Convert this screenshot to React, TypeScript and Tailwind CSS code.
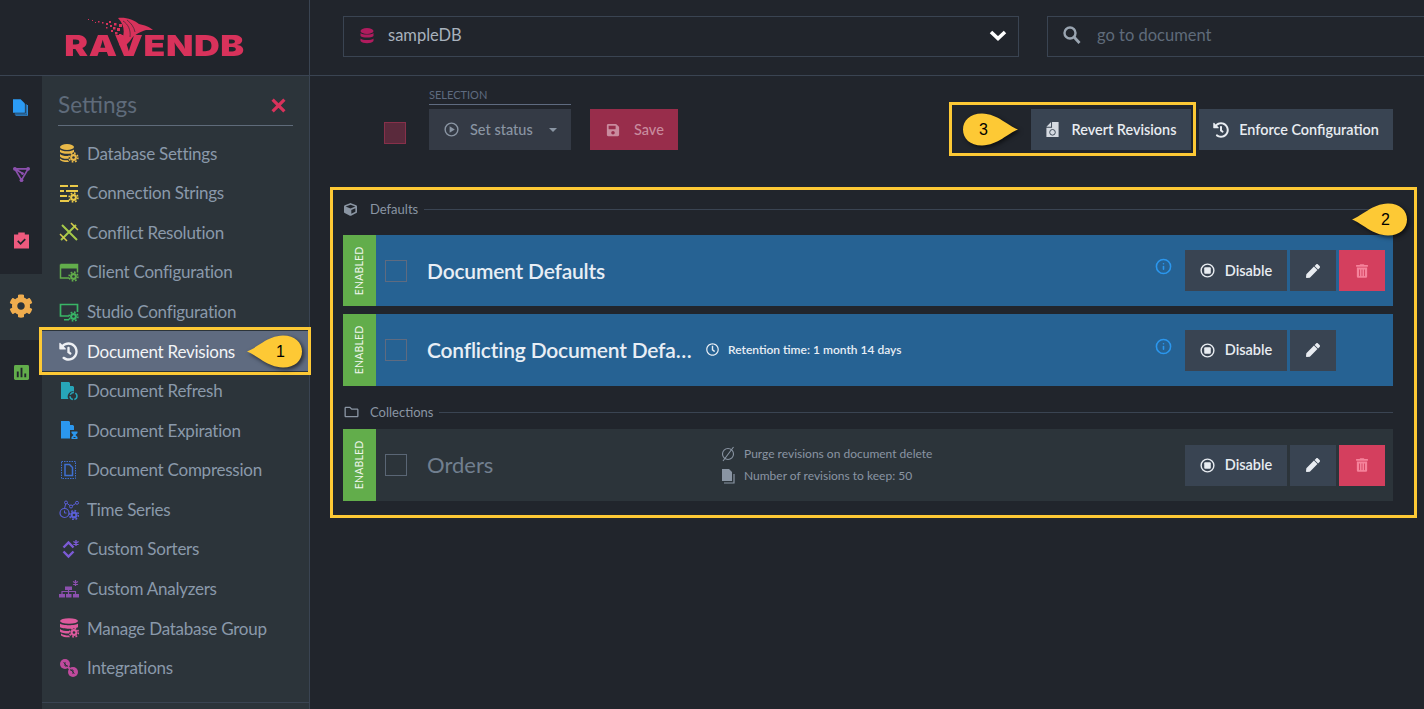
import type { ReactNode } from 'react'
import { FaCog, FaCube, FaHistory, FaPen, FaRegClock, FaRegFolder, FaSave, FaTrashAlt } from 'react-icons/fa'
import { Info } from 'lucide-react'

// small gear used on the settings icons
function Cog({ x, y, c, hole = '#2c343a' }: { x: number; y: number; c: string; hole?: string }) {
  return (
    <g>
      <circle cx={x} cy={y} r={3.4} fill={c} />
      <circle cx={x} cy={y} r={4.4} fill="none" stroke={c} strokeWidth={1.6} strokeDasharray="1.7 1.75" />
      <circle cx={x} cy={y} r={1.3} fill={hole} />
    </g>
  )
}

function Ico({ children, className = 'w-5 h-5' }: { children: ReactNode; className?: string }) {
  return <svg viewBox="0 0 20 20" className={className}>{children}</svg>
}

const menu: { label: string; icon: ReactNode; active?: boolean }[] = [
  {
    label: 'Database Settings',
    icon: (
      <Ico>
        <ellipse cx="8" cy="4" rx="7" ry="3" fill="#e9b949" />
        <path d="M1 6.500c2 2.400 12 2.400 14 0V9c-2 2.400-12 2.400-14 0zM1 11c2 2 7 2.400 9 1.700l-.4 3C6 16 2 15.400 1 13.500zM1 15.500c1.500 1.500 5 2 8 1.800l1 1.700c-4 .3-8-.5-9-2z" fill="#e9b949" />
        <Cog x={14.500} y={14.500} c="#e9b949" />
      </Ico>
    ),
  },
  {
    label: 'Connection Strings',
    icon: (
      <Ico>
        <path d="M1 2h8v2H1zM11 2h8v2h-8zM1 7h4v2H1zM7 7h12v2H7zM1 12h7v2H1zM1 17h9v2H1z" fill="#e9c949" />
        <Cog x={14.500} y={14.500} c="#e9c949" />
      </Ico>
    ),
  },
  {
    label: 'Conflict Resolution',
    icon: (
      <Ico>
        <path d="M2 18 17 3M3 3l15 15" stroke="#a5c94a" strokeWidth="2" fill="none" />
        <path d="M1 12l7 7M12 1l7 7" stroke="#d7c94a" strokeWidth="1.500" fill="none" />
      </Ico>
    ),
  },
  {
    label: 'Client Configuration',
    icon: (
      <Ico>
        <path d="M1.500 2.500h17v8M10 16H1.500v-13.500" stroke="#62ad4b" strokeWidth="1.500" fill="none" />
        <path d="M1 3h18v3.500H1z" fill="#62ad4b" />
        <Cog x={14.500} y={14.500} c="#62ad4b" />
      </Ico>
    ),
  },
  {
    label: 'Studio Configuration',
    icon: (
      <Ico>
        <path d="M10 14H1.500V2.500h17V10" stroke="#39b566" strokeWidth="1.700" fill="none" />
        <path d="M5 17h5v1.500H5z" fill="#39b566" />
        <Cog x={14.500} y={14.500} c="#39b566" />
      </Ico>
    ),
  },
  { label: 'Document Revisions', active: true, icon: <FaHistory className="w-[19px] h-[19px] text-[#eef0f4]" /> },
  {
    label: 'Document Refresh',
    icon: (
      <Ico>
        <path d="M2 1h8l5 5v4.500A5 5 0 0 0 9.500 18H2z" fill="#27a5b8" />
        <path d="M11 1l4 4h-4z" fill="#2c343a" />
        <circle cx="14.500" cy="15" r="3.500" fill="none" stroke="#27a5b8" strokeWidth="1.500" strokeDasharray="4.500 1.500" />
      </Ico>
    ),
  },
  {
    label: 'Document Expiration',
    icon: (
      <Ico>
        <path d="M2 1h8l5 5v4H11v8.500H2z" fill="#2b97ee" />
        <path d="M11 1l4 4h-4z" fill="#2c343a" />
        <path d="M12.500 11.500h6v1.500l-2 2 2 2v2h-6v-2l2-2-2-2z" fill="#2b97ee" />
        <path d="M14.500 17.500h2" stroke="#2c343a" strokeWidth="1" />
      </Ico>
    ),
  },
  {
    label: 'Document Compression',
    icon: (
      <Ico>
        <rect x="2.500" y="1.500" width="14" height="17" fill="none" stroke="#3f6fd1" strokeWidth="1" strokeDasharray="1.500 1" />
        <path d="M6 4.500h4.500l3 3v8H6z" fill="none" stroke="#3f6fd1" strokeWidth="1.500" />
      </Ico>
    ),
  },
  {
    label: 'Time Series',
    icon: (
      <Ico>
        <circle cx="5.500" cy="13" r="4.500" fill="none" stroke="#5a5fd6" strokeWidth="1.200" />
        <path d="M5.500 10.500V13h2" stroke="#5a5fd6" strokeWidth="1" fill="none" />
        <path d="M7 2.500l5 4 5.500-3.500M7 2.500 5.500 8.500" stroke="#5a5fd6" strokeWidth="1" fill="none" />
        <circle cx="7" cy="2.500" r="1.500" fill="#2c343a" stroke="#5a5fd6" />
        <circle cx="12" cy="6.500" r="1.500" fill="#2c343a" stroke="#5a5fd6" />
        <circle cx="18" cy="2.800" r="1.500" fill="#2c343a" stroke="#5a5fd6" />
        <Cog x={15} y={15} c="#5a5fd6" />
      </Ico>
    ),
  },
  {
    label: 'Custom Sorters',
    icon: (
      <Ico>
        <path d="M4.500 8.500 9.500 3.500l5 5M4.500 12.500l5 5 5-5" fill="none" stroke="#7c5bd6" strokeWidth="2.400" />
        <path d="M17 1v6M14.400 2.500l5.200 3M19.600 2.500l-5.200 3" stroke="#7c5bd6" strokeWidth="1.300" />
      </Ico>
    ),
  },
  {
    label: 'Custom Analyzers',
    icon: (
      <Ico>
        <path d="M6 7.500h7v3.500H6zM0 15h6v3.500H0zM7 15h5.500v3.500H7zM14 15h6v3.500h-6z" fill="#8c50ae" />
        <path d="M3 15v-2.500h13.500V15M9.500 11v4" stroke="#8c50ae" strokeWidth="1.200" fill="none" />
        <path d="M16.500 1v6M14 2.500l5 3M19 2.500l-5 3" stroke="#8c50ae" strokeWidth="1.300" />
      </Ico>
    ),
  },
  {
    label: 'Manage Database Group',
    icon: (
      <Ico>
        <ellipse cx="10" cy="3" rx="9" ry="2.800" fill="#dd5a9d" />
        <path d="M1 5.500c2 2.300 16 2.300 18 0v3.500c-2 2.300-16 2.300-18 0zM1 11c2 2 8 2.300 10 2l-1 2.500c-4 0-8-.5-9-2zM2 15.500c2 1.500 5 2 8 2l1 1.800c-4 .2-7-.3-9-1.800z" fill="#dd5a9d" />
        <Cog x={15} y={14.500} c="#dd5a9d" />
      </Ico>
    ),
  },
  {
    label: 'Integrations',
    icon: (
      <Ico>
        <circle cx="6" cy="6" r="5" fill="#c04a9d" />
        <circle cx="14" cy="14" r="5" fill="#c04a9d" />
        <path d="M6 4v4h3M4.500 4.500l4 4M14 16v-4h-3M15.500 15.500l-4-4" stroke="#2c343a" strokeWidth="1" fill="none" />
        <path d="M8 9.500 10.500 12l1.500-1.500-2.500-2.500z" fill="#c04a9d" />
      </Ico>
    ),
  },
]

const rail: ReactNode[] = [
  <svg viewBox="0 0 20 22" className="w-[17px] h-[21px]">
    <path d="M3 19h14V7" fill="none" stroke="#2f8fdf" strokeWidth="1.200" />
    <path d="M2 17.500h13.500V6" fill="none" stroke="#2f8fdf" strokeWidth="1.200" />
    <path d="M0 0h9l5 5v11H0z" fill="#2b9bf4" />
  </svg>,
  <svg viewBox="0 0 18 18" className="w-[17px] h-[17px]">
    <path d="M2 3h14L9 15zM2 3l9 5.500M16 3 9 15" fill="none" stroke="#8c50ae" strokeWidth="1.800" />
    <circle cx="2" cy="3" r="2" fill="#8c50ae" />
    <circle cx="16" cy="3" r="2" fill="#8c50ae" />
    <circle cx="9" cy="15" r="2" fill="#8c50ae" />
    <circle cx="10" cy="8" r="1.500" fill="#8c50ae" />
  </svg>,
  <svg viewBox="0 0 16 18" className="w-[15px] h-[18px]">
    <path d="M0 3h4.500V1h7v2H16v15H0z" fill="#ee5a7e" />
    <path d="M4 10l3 3 5-5" fill="none" stroke="#21252c" strokeWidth="1.800" />
  </svg>,
  <FaCog className="w-[24px] h-[24px] text-[#f0ad4e]" />,
  <svg viewBox="0 0 16 16" className="w-[15px] h-[15px]">
    <rect width="16" height="16" rx="1.500" fill="#62ad4b" />
    <path d="M3 7h2v6H3zM7 3h2v10H7zM11 9h2v4h-2z" fill="#21252c" />
  </svg>,
]

// teardrop marker of the annotations
function Callout({ n, dir, className }: { n: string; dir: 'left' | 'right'; className: string }) {
  return (
    <div className={`absolute w-[56px] h-[33px] ${className}`}>
      <svg viewBox="0 0 56 33" className="absolute inset-0 w-full h-full drop-shadow-[2px_2px_2px_rgba(0,0,0,0.6)]">
        {dir === 'left' ? (
          <path d="M0 16.500C10 13 20 1 36 .5c12 0 19 7 19 16s-7 16-19 16C20 32 10 20 0 16.500z" fill="#fdc935" />
        ) : (
          <path d="M56 16.500C46 13 36 1 20 .5c-12 0-19 7-19 16s7 16 19 16C36 32 46 20 56 16.500z" fill="#fdc935" />
        )}
      </svg>
      <span className={`absolute top-0 leading-[33px] text-[16px] text-black [font-family:'Liberation_Sans',sans-serif] ${dir === 'left' ? 'left-[29px]' : 'left-[17px]'}`}>{n}</span>
    </div>
  )
}

function StopCircle() {
  return (
    <svg viewBox="0 0 16 16" className="w-[15px] h-[15px]">
      <circle cx="8" cy="8" r="6.800" fill="none" stroke="#e8ecf1" strokeWidth="1.500" />
      <rect x="4.500" y="4.500" width="7" height="7" rx="1" fill="#e8ecf1" />
    </svg>
  )
}

function Actions({ del = true }: { del?: boolean }) {
  return (
    <div className="flex gap-[3px]">
      <button className="w-[102px] h-[41px] bg-[#394452] flex items-center justify-center gap-[10px] text-[14.500px] font-semibold text-[#e8ecf1]">
        <StopCircle />
        Disable
      </button>
      <button className="w-[46px] h-[41px] bg-[#394452] flex items-center justify-center text-[#e8ecf1]">
        <FaPen className="w-[14px] h-[14px]" />
      </button>
      {del ? (
        <button className="w-[46px] h-[41px] bg-[#d43f5e] flex items-center justify-center text-[#f5839b]">
          <FaTrashAlt className="w-[12px] h-[14px]" />
        </button>
      ) : (
        <div className="w-[46px]" />
      )}
    </div>
  )
}

function Row({ title, h, blue, details, info, del }: { title: string; h: string; blue?: boolean; details?: ReactNode; info?: boolean; del?: boolean }) {
  return (
    <div className={`flex items-center ${h} ${blue ? 'bg-[#266293]' : 'bg-[#2c343a]'}`}>
      <div className="w-[33px] self-stretch bg-[#62ad4b] flex items-center justify-center">
        <span className="-rotate-90 text-[10.500px] tracking-[0.2px] text-[#f0f6ee] whitespace-nowrap">ENABLED</span>
      </div>
      <div className={`ml-[9px] w-[22px] h-[22px] border ${blue ? 'border-[#5f6b80]' : 'border-[#5a6675]'}`} />
      <div className={`ml-[20px] w-[268px] truncate leading-[30px] ${blue ? 'text-[21px] font-semibold tracking-[-0.2px] text-[#e8eef5]' : 'text-[22px] text-[#717f8f]'}`}>{title}</div>
      <div className="ml-[10px] flex-1">{details}</div>
      {info && <Info className="w-[17px] h-[17px] text-[#2b97ee] mr-[13px] mb-[8px]" strokeWidth={2.200} />}
      <div className="mr-[8px]">
        <Actions del={del} />
      </div>
    </div>
  )
}

function Section({ icon, label, className }: { icon: ReactNode; label: string; className: string }) {
  return (
    <div className={`flex items-center h-[20px] ${className}`}>
      <div className="w-[27px] pl-[1px] text-[#8a95a3] flex items-center">{icon}</div>
      <span className="text-[13px] text-[#8a95a3] pt-[1px]">{label}</span>
      <div className="ml-[6px] flex-1 border-t border-[#3a4452]" />
    </div>
  )
}

export default function App() {
  return (
    <div className="w-[1424px] h-[709px] overflow-hidden bg-[#21252c] flex flex-col [font-family:Lato,'Noto_Sans',sans-serif]">
      <header className="h-[76px] shrink-0 flex border-b border-[#3a4452]">
        <div className="w-[310px] shrink-0 border-r border-[#3a4452] relative">
          <svg viewBox="0 0 70 40" className="absolute left-[86px] top-[16px] w-[70px] h-[40px] overflow-visible">
            <path d="M32 2C40 1 48 4 53 8c5 1 11 3 14 6h-7c-6 2-13 5-16 11l-6 6-5-2c6-8 7-19 -1-27z" fill="#d8325b" />
            <path d="M37 5c5 3 8 9 7 16M41 4c4 3 7 7 8 12" stroke="#21252c" strokeWidth=".6" fill="none" />
            <g fill="#d8325b">
              <rect x="33" y="8" width="3" height="3" /><rect x="28" y="7" width="2.500" height="2.500" /><rect x="31" y="12" width="3" height="3" />
              <rect x="27" y="11" width="2.500" height="2.500" /><rect x="24" y="9" width="2" height="2" /><rect x="23" y="5" width="2" height="2" />
              <rect x="20" y="7" width="2" height="2" /><rect x="16" y="6" width="1.500" height="1.500" /><rect x="12" y="5" width="1.500" height="1.500" />
              <rect x="9" y="6" width="1" height="1" /><rect x="2" y="3" width="1" height="1" /><rect x="6" y="4" width="1" height="1" />
              <rect x="29" y="16" width="2.500" height="2.500" /><rect x="25" y="14" width="2" height="2" /><rect x="20" y="11" width="1.500" height="1.500" />
              <rect x="33" y="18" width="2.500" height="2.500" />
            </g>
          </svg>
          <span className="absolute left-[65px] top-[31px] w-[179px] text-center text-[29px] leading-[30px] font-black text-[#d8325b] tracking-[0.5px] scale-x-[1.230] [font-family:Inter,sans-serif]">RAVENDB</span>
        </div>
        <div className="flex-1 flex items-center pl-[33px] gap-[28px] pb-[2px]">
          <div className="w-[676px] h-[41px] border border-[#3a4452] flex items-center pl-[16px] pr-[11px] pb-[2px]">
            <svg viewBox="0 0 14 16" className="w-[14px] h-[16px]">
              <ellipse cx="7" cy="3" rx="6.500" ry="3" fill="#b01c5e" />
              <path d="M.5 5c2 2 11 2 13 0v3c-2 2-11 2-13 0zM.5 10.500c2 2 11 2 13 0v2.500c-2 3-11 3-13 0z" fill="#b01c5e" />
            </svg>
            <span className="ml-[14px] text-[16.500px] text-[#a8b2bd]">sampleDB</span>
            <svg viewBox="0 0 18 11" className="ml-auto w-[18px] h-[11px]">
              <path d="M2 2l7 6.500L16 2" fill="none" stroke="#fff" strokeWidth="3.600" />
            </svg>
          </div>
          <div className="flex-1 h-[41px] border border-[#3a4452] border-r-0 flex items-center pl-[15px] pb-[3px]">
            <svg viewBox="0 0 18 18" className="w-[18px] h-[18px]">
              <circle cx="7" cy="7" r="5.500" fill="none" stroke="#9aa5b1" strokeWidth="2.400" />
              <path d="M11 11l5.500 6" stroke="#9aa5b1" strokeWidth="2.800" />
            </svg>
            <span className="ml-[16px] text-[16.500px] text-[#5f6b7a]">go to document</span>
          </div>
        </div>
      </header>

      <div className="flex-1 flex min-h-0">
        <nav className="w-[42px] shrink-0">
          {rail.map((icon, i) => (
            <div key={i} className={`h-[66px] pb-[2px] flex items-center justify-center ${i === 3 ? 'bg-[#2c343a]' : ''}`}>{icon}</div>
          ))}
        </nav>

        <aside className="w-[268px] shrink-0 bg-[#2c343a] border-r border-[#3a4452]">
          <div className="mx-[16px] h-[50px] border-b border-[#5f6b7a] flex items-center justify-between pt-[9px]">
            <span className="text-[22.500px] text-[#5f6b7a]">Settings</span>
            <span className="text-[#d8325b] mr-[7px]">
              <svg viewBox="0 0 14 14" className="w-[15px] h-[15px]"><path d="M1.500 1.500l11 11M12.500 1.500l-11 11" stroke="currentColor" strokeWidth="3" /></svg>
            </span>
          </div>
          <ul className="mt-[7.500px]">
            {menu.map(m => (
              <li key={m.label} className={`relative h-[39.600px] pl-[16px] flex items-center gap-[8px] ${m.active ? 'bg-[#5f6b80] text-[#f2f4f7]' : 'text-[#8a99aa]'}`}>
                <span className="w-[21px] flex items-center justify-center">{m.icon}</span>
                <span className="text-[17px] tracking-[-0.25px]">{m.label}</span>
                {m.active && (
                  <>
                    <div className="absolute -left-[3px] -right-[2px] -top-[4px] -bottom-[4px] border-[3px] border-[#fdc935]" />
                    <Callout n="1" dir="left" className="left-[205px] top-[4px]" />
                  </>
                )}
              </li>
            ))}
          </ul>
          <div className="mt-[14px] border-t border-[#3a4452]" />
        </aside>

        <main className="relative flex-1 pl-[33px] pr-[31px] pt-[13px]">
          <div className="flex items-end">
            <div className="ml-[41px] mb-[6px] w-[22px] h-[22px] bg-[#5a2a3c] border border-[#87304a]" />
            <div className="ml-[23px] w-[142px]">
              <div className="h-[16px] border-b border-[#5f6b80] text-[11px] leading-[12px] text-[#5f6b80]">SELECTION</div>
              <button className="mt-[4px] w-full h-[41px] bg-[#343a45] flex items-center pl-[15px] text-[14.500px] font-medium text-[#8a95a3]">
                <svg viewBox="0 0 16 16" className="w-[15px] h-[15px]">
                  <circle cx="8" cy="8" r="6.800" fill="none" stroke="#8a95a3" strokeWidth="1.500" />
                  <path d="M6 4.500l5.500 3.500L6 11.500z" fill="#8a95a3" />
                </svg>
                <span className="ml-[11px]">Set status</span>
                <span className="ml-[16px] w-0 h-0 border-x-4 border-x-transparent border-t-4 border-t-[#8a95a3]" />
              </button>
            </div>
            <button className="ml-[19px] w-[88px] h-[41px] bg-[#982d4b] flex items-center pl-[16px] text-[14.500px] font-medium text-[#c98b9e]">
              <FaSave className="w-[14px] h-[14px]" />
              <span className="ml-[14px]">Save</span>
            </button>
            <button className="ml-auto w-[160px] h-[41px] bg-[#394452] flex items-center justify-center gap-[13px] text-[14.400px] font-semibold text-[#e8ecf1]">
              <svg viewBox="0 0 13 16" className="w-[13px] h-[15px]">
                <path d="M0 5l5-5v5zM6 0h7v16H0V6h6z" fill="#d5dae1" />
                <circle cx="6.500" cy="11" r="3" fill="none" stroke="#394452" strokeWidth="1" />
              </svg>
              Revert Revisions
            </button>
            <button className="ml-[8px] w-[194px] h-[41px] bg-[#394452] flex items-center justify-center gap-[10px] text-[14.400px] font-semibold text-[#e8ecf1]">
              <FaHistory className="w-[16px] h-[16px]" />
              Enforce Configuration
            </button>
          </div>

          <Section className="mt-[49px]" label="Defaults" icon={<FaCube className="w-[13px] h-[13px]" />} />
          <div className="mt-[16px] flex flex-col gap-[8px]">
            <Row title="Document Defaults" h="h-[71px]" blue info del />
            <Row
              title="Conflicting Document Defaults"
              h="h-[72px]"
              blue
              info
              del={false}
              details={
                <div className="flex items-center text-[12px] font-semibold text-[#e8eef5]">
                  <FaRegClock className="w-[13px] h-[13px] ml-px mb-[2px]" />
                  <span className="ml-[9px]">Retention time: 1 month 14 days</span>
                </div>
              }
            />
          </div>
          <Section className="mt-[16px]" label="Collections" icon={<FaRegFolder className="w-[15px] h-[14px]" />} />
          <div className="mt-[7px]">
            <Row
              title="Orders"
              h="h-[72px]"
              del
              details={
                <div className="pl-[15px] text-[12px] text-[#8a95a3] flex flex-col gap-[4px]">
                  <div className="flex items-center">
                    <svg viewBox="0 0 16 16" className="w-[16px] h-[16px]">
                      <circle cx="8" cy="8" r="5.500" fill="none" stroke="#8a95a3" strokeWidth="1.100" />
                      <path d="M3 15 13.500 1" stroke="#8a95a3" strokeWidth="1.100" />
                    </svg>
                    <span className="ml-[8px]">Purge revisions on document delete</span>
                  </div>
                  <div className="flex items-center">
                    <svg viewBox="0 0 16 16" className="w-[16px] h-[16px]">
                      <path d="M2 1h7l3 3v9H2z" fill="#8a95a3" />
                      <path d="M14 6v9H4" fill="none" stroke="#8a95a3" strokeWidth="1.200" />
                    </svg>
                    <span className="ml-[8px]">Number of revisions to keep: 50</span>
                  </div>
                </div>
              }
            />
          </div>

          {/* annotation frames lie over the page */}
          <div className="absolute left-[639px] top-[26px] w-[247px] h-[54px] border-[3px] border-[#fdc935] pointer-events-none" />
          <Callout n="3" dir="right" className="left-[652px] top-[37px]" />
          <div className="absolute left-[20px] top-[111px] w-[1087px] h-[331px] border-[3px] border-[#fdc935] pointer-events-none" />
          <Callout n="2" dir="left" className="left-[1042px] top-[127px]" />
        </main>
      </div>
    </div>
  )
}
